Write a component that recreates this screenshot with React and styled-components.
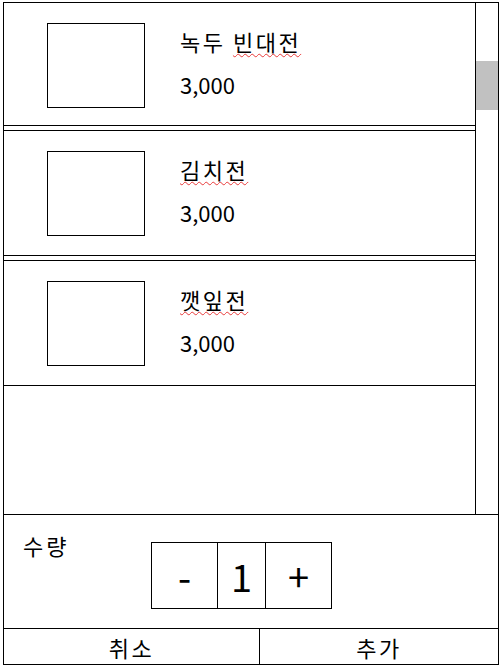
import styled, { createGlobalStyle } from "styled-components";
import { useState } from "react";

const GlobalStyle = createGlobalStyle`
  html, body {
    margin: 0;
    padding: 0;
    background: #fff;
  }
  body {
    font-family: "Noto Sans CJK KR", "Noto Sans", sans-serif;
    color: #000;
  }
`;

const Frame = styled.div`
  box-sizing: border-box;
  width: 496px;
  height: 663px;
  margin: 2px 0 0 3px;
  border: 1px solid #000;
  display: flex;
  flex-direction: column;
`;

const ListRow = styled.div`
  display: flex;
  height: 512px;
  box-sizing: border-box;
  border-bottom: 1px solid #000;
`;

const List = styled.div`
  flex: 1;
  border-right: 1px solid #000;
  overflow: hidden;
`;

const Track = styled.div`
  width: 22px;
  padding-top: 58px;
`;

const Thumb = styled.div`
  height: 49px;
  background: #c1c1c1;
`;

const Item = styled.div`
  display: flex;
  padding: 20px 0 0 43px;
  box-sizing: content-box;
  height: 104px;
  border-top: 1px solid #000;
  border-bottom: 1px solid #000;
  margin-top: 4px;
  &:first-child {
    border-top: none;
    margin-top: 0;
    height: 102px;
  }
`;

const Picture = styled.div`
  width: 96px;
  height: 83px;
  border: 1px solid #000;
  flex-shrink: 0;
`;

const Info = styled.div`
  display: flex;
  flex-direction: column;
  margin-left: 35px;
  font-size: 22px;
`;

const Name = styled.div`
  line-height: 30px;
  margin-top: 3px;
  letter-spacing: 2.5px;
`;

const Spell = styled.span`
  text-decoration: underline wavy #e83a3a;
  text-decoration-thickness: 1px;
  text-underline-offset: 2px;
`;

const Price = styled.div`
  line-height: 30px;
  margin-top: 13px;
`;

const QtySection = styled.div`
  display: flex;
  align-items: flex-start;
  height: 114px;
  box-sizing: border-box;
  border-bottom: 1px solid #000;
  padding-left: 19px;
`;

const QtyLabel = styled.div`
  width: 128px;
  font-size: 22px;
  line-height: 30px;
  margin-top: 15px;
  letter-spacing: 3px;
`;

const Counter = styled.div`
  display: flex;
  margin-top: 27px;
  border: 1px solid #000;
`;

const Cell = styled.div`
  width: ${(p) => (p.$wide ? "65px" : "47px")};
  height: 65px;
  display: flex;
  align-items: center;
  justify-content: center;
  font-size: 38px;
  & + & {
    border-left: 1px solid #000;
  }
`;

const Footer = styled.div`
  flex: 1;
  display: flex;
`;

const FooterButton = styled.div`
  display: flex;
  align-items: center;
  justify-content: center;
  font-size: 22px;
  letter-spacing: 2.5px;
  ${(p) => (p.$left ? "width: 255px; border-right: 1px solid #000;" : "flex: 1;")}
`;

const menu = [
  { name: [["녹두 ", false], ["빈대전", true]], price: "3,000" },
  { name: [["김치전", true]], price: "3,000" },
  { name: [["깻잎전", true]], price: "3,000" },
];

export default function App() {
  const [count] = useState(1);
  return (
    <>
      <GlobalStyle />
      <Frame>
        <ListRow>
          <List>
            {menu.map((m, i) => (
              <Item key={i}>
                <Picture />
                <Info>
                  <Name>
                    {m.name.map(([t, bad], j) =>
                      bad ? <Spell key={j}>{t}</Spell> : <span key={j}>{t}</span>
                    )}
                  </Name>
                  <Price>{m.price}</Price>
                </Info>
              </Item>
            ))}
          </List>
          <Track>
            <Thumb />
          </Track>
        </ListRow>
        <QtySection>
          <QtyLabel>수량</QtyLabel>
          <Counter>
            <Cell $wide>-</Cell>
            <Cell>{count}</Cell>
            <Cell $wide>+</Cell>
          </Counter>
        </QtySection>
        <Footer>
          <FooterButton $left>취소</FooterButton>
          <FooterButton>추가</FooterButton>
        </Footer>
      </Frame>
    </>
  );
}
